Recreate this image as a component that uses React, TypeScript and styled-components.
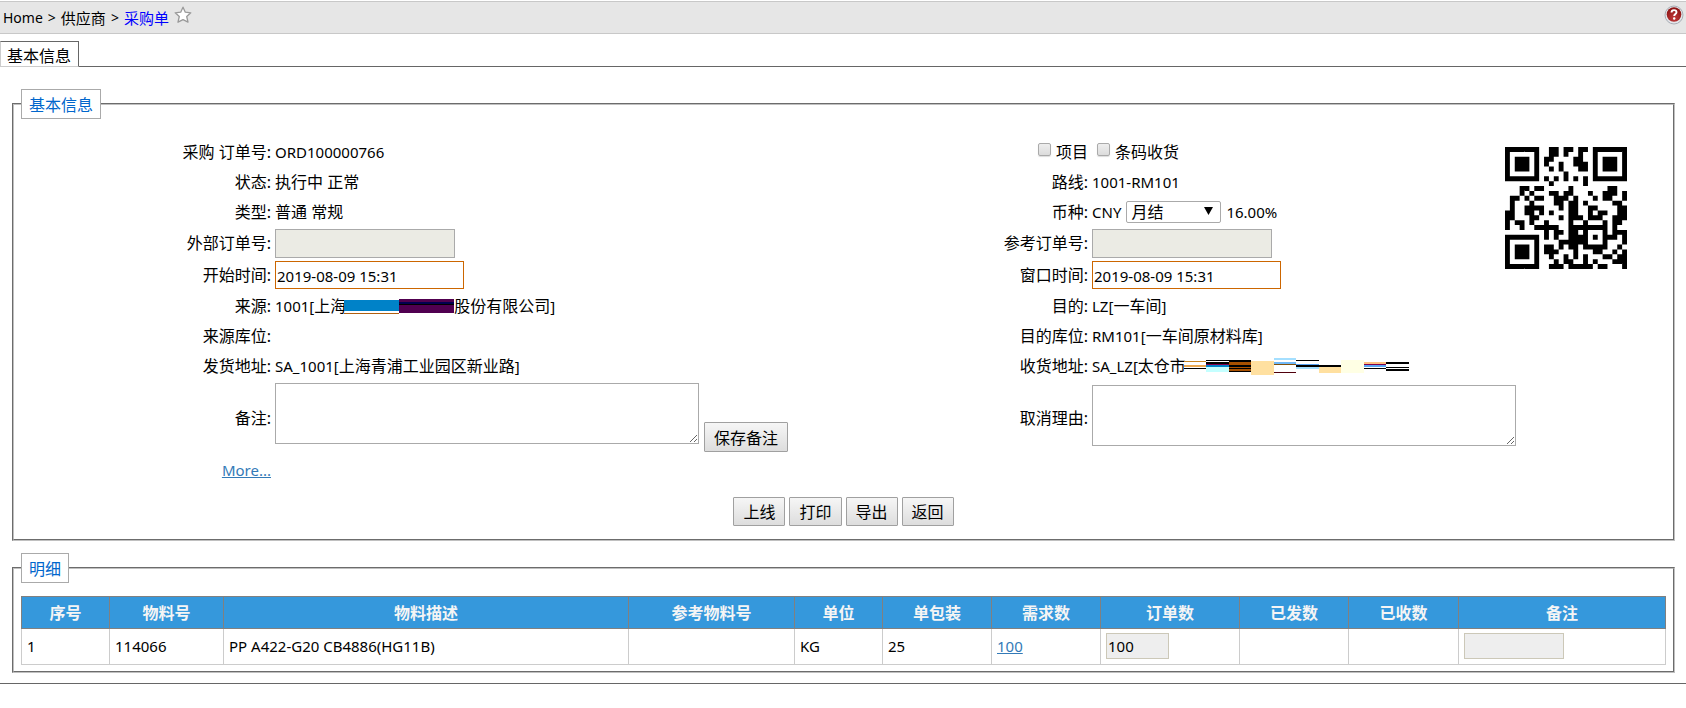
import React from "react";
import styled, { createGlobalStyle } from "styled-components";

/* ---------- QR code (version 2, level H, mask 6, byte mode) ---------- */

const QR_SIZE = 25;
const QR_DATA_CODEWORDS = 16;
const QR_EC_CODEWORDS = 28;
const QR_FORMAT = "000110100001100";

function gfMul(a: number, b: number): number {
  let r = 0;
  for (let i = 7; i >= 0; i--) {
    r = (r << 1) ^ ((r >>> 7) * 0x11d);
    r ^= ((b >>> i) & 1) * a;
  }
  return r;
}

function ecCodewords(data: number[]): number[] {
  const gen: number[] = new Array(QR_EC_CODEWORDS).fill(0);
  gen[QR_EC_CODEWORDS - 1] = 1;
  let root = 1;
  for (let i = 0; i < QR_EC_CODEWORDS; i++) {
    for (let j = 0; j < gen.length; j++) {
      gen[j] = gfMul(gen[j], root);
      if (j + 1 < gen.length) gen[j] ^= gen[j + 1];
    }
    root = gfMul(root, 2);
  }
  const rem: number[] = new Array(QR_EC_CODEWORDS).fill(0);
  data.forEach((byte) => {
    const factor = byte ^ (rem.shift() as number);
    rem.push(0);
    gen.forEach((g, i) => {
      rem[i] ^= gfMul(g, factor);
    });
  });
  return rem;
}

function encodeQr(text: string): boolean[][] {
  let bits = "0100" + text.length.toString(2).padStart(8, "0");
  for (const ch of text) bits += ch.charCodeAt(0).toString(2).padStart(8, "0");
  bits += "0000";
  const data: number[] = [];
  for (let i = 0; i < bits.length; i += 8) data.push(parseInt(bits.slice(i, i + 8), 2));
  for (let pad = 0xec; data.length < QR_DATA_CODEWORDS; pad ^= 0xec ^ 0x11) data.push(pad);
  const stream = [...data, ...ecCodewords(data)].map((b) => b.toString(2).padStart(8, "0")).join("");

  const grid: (boolean | null)[][] = Array.from({ length: QR_SIZE }, () => new Array(QR_SIZE).fill(null));
  const put = (r: number, c: number, v: boolean) => {
    if (r >= 0 && c >= 0 && r < QR_SIZE && c < QR_SIZE) grid[r][c] = v;
  };
  for (let i = 0; i < QR_SIZE; i++) {
    put(6, i, i % 2 === 0);
    put(i, 6, i % 2 === 0);
  }
  [[3, 3], [3, 21], [21, 3]].forEach(([cr, cc]) => {
    for (let dr = -4; dr <= 4; dr++)
      for (let dc = -4; dc <= 4; dc++) {
        const d = Math.max(Math.abs(dr), Math.abs(dc));
        put(cr + dr, cc + dc, d !== 2 && d !== 4);
      }
  });
  for (let dr = -2; dr <= 2; dr++)
    for (let dc = -2; dc <= 2; dc++) put(18 + dr, 18 + dc, Math.max(Math.abs(dr), Math.abs(dc)) !== 1);

  const near = [[8, 0], [8, 1], [8, 2], [8, 3], [8, 4], [8, 5], [8, 7], [8, 8], [7, 8], [5, 8], [4, 8], [3, 8], [2, 8], [1, 8], [0, 8]];
  [...QR_FORMAT].forEach((bit, i) => {
    put(near[i][0], near[i][1], bit === "1");
    if (i < 7) put(24 - i, 8, bit === "1");
    else put(8, 10 + i, bit === "1");
  });
  put(17, 8, true);

  let n = 0;
  for (let right = QR_SIZE - 1; right >= 1; right -= 2) {
    if (right === 6) right = 5;
    for (let v = 0; v < QR_SIZE; v++)
      for (let j = 0; j < 2; j++) {
        const c = right - j;
        const r = ((right + 1) & 2) === 0 ? QR_SIZE - 1 - v : v;
        if (grid[r][c] !== null) continue;
        const invert = (((r * c) % 2) + ((r * c) % 3)) % 2 === 0;
        grid[r][c] = (stream[n++] === "1") !== invert;
      }
  }
  return grid as boolean[][];
}

/* ---------- styles ---------- */

const GlobalStyle = createGlobalStyle`
  *, *::before, *::after { box-sizing: border-box; }
  body {
    margin: 0;
    background: #fff;
    color: #000;
    font: 400 16px/24px "Noto Sans", "Noto Sans CJK SC", sans-serif;
  }
  button, input, select, textarea { font: inherit; color: inherit; margin: 0; }
`;

const Latin = styled.span<{ $size?: number }>`
  font-size: ${(p) => p.$size ?? 15}px;
`;

const TopBar = styled.header`
  display: flex;
  justify-content: space-between;
  align-items: center;
  height: 33px;
  margin-top: 1px;
  padding: 0 2px 0 3px;
  background: #e6e6e6;
  border: solid #c8c8c8;
  border-width: 1px 0;
`;

const Breadcrumb = styled.nav`
  display: flex;
  align-items: center;
  gap: 5px;
  font-size: 15px;
`;

const CrumbLink = styled.a<{ $current?: boolean }>`
  color: ${(p) => (p.$current ? "#0000ff" : "#000")};
  text-decoration: none;
`;

const IconButton = styled.button`
  display: flex;
  padding: 0 0 5px;
  border: 0;
  background: none;
`;

const TabList = styled.div`
  display: flex;
  margin-top: 7px;
`;

const Tab = styled.button`
  position: relative;
  height: 26px;
  margin-bottom: -1px;
  padding: 4px 7px 0 6px;
  border: 1px solid #666;
  border-left-color: #ccc;
  border-bottom-color: #ccc;
  background: #fff;
  line-height: 20px;
`;

const TabPanel = styled.main`
  padding: 22px 11px 10px 12px;
  border: solid #666;
  border-width: 1px 0;
`;

const Panel = styled.fieldset<{ $top: number; $bottom: number }>`
  min-width: 0;
  margin: 0 0 ${(p) => (p.$bottom > 10 ? 12 : 0)}px;
  padding: ${(p) => p.$top}px 7px ${(p) => p.$bottom}px;
  border: 2px groove #c0c0c0;
`;

const Legend = styled.legend`
  padding: 3px 7px 1px;
  border: 1px solid #aaa;
  background: #fff;
  color: #0066cc;
`;

const FormGrid = styled.div`
  display: grid;
  grid-template-columns:
    minmax(0, 250fr) minmax(0, 560fr) minmax(0, 249fr) minmax(0, 409fr)
    minmax(0, 161fr);
  grid-template-rows:
    repeat(3, minmax(30px, auto)) repeat(2, minmax(32px, auto))
    repeat(3, minmax(30px, auto)) minmax(73px, auto) minmax(32px, auto);
  column-gap: 4px;
  align-items: center;
`;

const FieldLabel = styled.label<{ $right?: boolean }>`
  grid-column: ${(p) => (p.$right ? 3 : 1)};
  text-align: right;
  white-space: nowrap;
`;

const FieldValue = styled.div<{ $right?: boolean; $wide?: boolean }>`
  grid-column: ${(p) => (p.$right ? (p.$wide ? "4 / 6" : 4) : 2)};
  display: flex;
  align-items: center;
  gap: ${(p) => (p.$wide ? 0 : 5)}px;
  white-space: nowrap;
`;

const CheckLabel = styled.label<{ $column: number }>`
  grid-column: ${(p) => p.$column};
  justify-self: ${(p) => (p.$column === 3 ? "end" : "start")};
  display: flex;
  align-items: center;
  gap: 5px;
  padding-left: 5px;
`;

const CheckBox = styled.input`
  appearance: none;
  width: 13px;
  height: 13px;
  margin-bottom: 5px;
  border: 1px solid #aaa;
  border-radius: 2px;
  background: linear-gradient(#eee, #dcdcdc);
  box-shadow: 0 1px 1px #ddd;
`;

const TextInput = styled.input<{ $kind: "disabled" | "date" | "qty" | "note" }>`
  display: block;
  padding: ${(p) => (p.$kind === "date" ? "1px 1px 0" : "1px")};
  border: 1px solid;
  font-size: 15px;
  ${(p) => p.$kind === "disabled" && "width: 180px; height: 29px; border-color: #aaa; background: #ebebe4;"}
  ${(p) => p.$kind === "date" && "width: 189px; height: 28px; border-color: #cc6600; background: #fff;"}
  ${(p) => p.$kind === "qty" && "width: 63px; height: 26px; border-color: #ccc8b8; background: #eee;"}
  ${(p) => p.$kind === "note" && "width: 100px; height: 26px; border-color: #ccc8b8; background: #eee;"}
`;

const SelectWrap = styled.div`
  position: relative;
`;

const Select = styled.select`
  display: block;
  appearance: none;
  width: 95px;
  height: 22px;
  padding: 0 4px;
  border: 1px solid #aaa;
  border-radius: 2px;
  background: #fff;
  line-height: 20px;
`;

const SelectArrow = styled.svg`
  position: absolute;
  top: 6px;
  right: 8px;
  pointer-events: none;
`;

const RemarkRow = styled.div`
  display: flex;
  gap: 5px;
`;

const TextArea = styled.textarea<{ $right?: boolean }>`
  display: block;
  width: 424px;
  height: 61px;
  margin-bottom: ${(p) => (p.$right ? 4 : 0)}px;
  padding: 2px;
  border: 1px solid #aaa;
  background: #fff;
`;

const Button = styled.button<{ $tall?: boolean }>`
  align-self: flex-end;
  height: ${(p) => (p.$tall ? 30 : 29)}px;
  margin-top: ${(p) => (p.$tall ? 39 : 0)}px;
  padding: 1px 9px 0;
  border: 1px solid #a0a0a0;
  border-radius: 1px;
  background: linear-gradient(#f6f6f6, #dddddd);
  line-height: 24px;
`;

const TextLink = styled.a`
  color: #337ab7;
  font-size: 15px;
`;

const Actions = styled.div`
  display: flex;
  justify-content: center;
  gap: 4px;
  padding-top: 11px;
`;

const QrBox = styled.div`
  grid-column: 5;
  grid-row: 1 / 6;
  align-self: start;
  padding-top: 10px;
`;

const StripSvg = styled.svg`
  flex: none;
  margin-left: -2px;
`;

const Detail = styled.table`
  width: 100%;
  table-layout: fixed;
  border-collapse: collapse;
`;

const HeadCell = styled.th`
  height: 32px;
  padding: 0 5px;
  border: 1px solid #808080;
  background: #3598dc;
  color: #f5f5f5;
  font-weight: 700;
`;

const Cell = styled.td`
  height: 36px;
  padding: 0 5px 2px;
  border: 1px solid #ccc;
  font-size: 15px;
`;

/* ---------- drawings ---------- */

function QrCode({ text }: { text: string }) {
  const path = encodeQr(text)
    .map((row, r) => row.map((on, c) => (on ? `M${c} ${r}h1v1h-1z` : "")).join(""))
    .join("");
  return (
    <svg width="122" height="122" viewBox="0 0 25 25" role="img" aria-label={text} display="block">
      <path d={path} fill="#000" />
    </svg>
  );
}

function StarIcon() {
  return (
    <svg width="18" height="18" viewBox="0 0 18 18" aria-hidden="true">
      <path
        d="M9 1.200l2.300 5 5.500.6-4.100 3.700 1.300 5.700L9 13.600l-5 2.600 1.300-5.700L1.200 6.800l5.500-.6z"
        fill="#fff"
        stroke="#999"
        strokeWidth="1.300"
        strokeLinejoin="round"
      />
    </svg>
  );
}

function HelpIcon() {
  return (
    <svg width="20" height="20" viewBox="0 0 20 20" aria-hidden="true">
      <defs>
        <radialGradient id="helpRed" cx="50%" cy="75%" r="70%">
          <stop offset="0" stopColor="#c23a3a" />
          <stop offset="1" stopColor="#8c1414" />
        </radialGradient>
      </defs>
      <circle cx="10" cy="10" r="9" fill="#e4e6ea" stroke="#a9aeb6" />
      <circle cx="10" cy="9.500" r="7.300" fill="url(#helpRed)" />
      <path d="M7.500 7.600c0-1.700 1.100-2.500 2.500-2.500s2.500.9 2.500 2.200c0 1.700-2.300 1.800-2.300 3.700" fill="none" stroke="#fff" strokeWidth="1.900" />
      <circle cx="10.200" cy="13.500" r="1.200" fill="#fff" />
    </svg>
  );
}

type Strip = [x: number, y: number, w: number, h: number, fill: string];

const sourceStrips: Strip[] = [
  [0, 1, 55, 11, "#0082c8"],
  [0, 14, 55, 1, "#b06010"],
  [55, 0, 55, 14, "#500050"],
  [55, 3, 55, 3, "#000050"],
  [55, 5, 55, 1, "#000"],
];

const addressStrips: Strip[] = [
  [0, 3, 22, 1, "#c88420"], [0, 7, 22, 2, "#eba850"], [0, 10, 22, 1, "#000"],
  [22, 2, 23, 1, "#000"], [22, 4, 23, 2, "#000"], [22, 6, 23, 1, "#80004c"], [22, 7, 23, 2, "#0080c8"], [22, 9, 23, 5, "#c4ffff"],
  [45, 2, 22, 12, "#000"], [45, 4, 22, 3, "#a85000"], [45, 9, 22, 1, "#a85000"], [45, 11, 22, 2, "#a85000"],
  [67, 3, 23, 14, "#ffe0a0"],
  [90, 0, 22, 2, "#a4dfff"], [90, 4, 22, 2, "#70b8f8"], [90, 6, 22, 1, "#80500c"], [90, 14, 22, 1, "#50000c"],
  [112, 2, 23, 1, "#000"], [112, 6, 23, 1, "#58a4f4"], [112, 7, 23, 2, "#000"], [112, 9, 23, 2, "#a4dfff"],
  [135, 7, 22, 2, "#000"], [135, 9, 22, 6, "#ffe0a0"],
  [157, 2, 23, 13, "#ffffe4"],
  [180, 4, 22, 2, "#ffc080"], [180, 6, 22, 1, "#80004c"], [180, 7, 22, 2, "#58a4f4"], [180, 10, 22, 1, "#000"],
  [202, 4, 23, 2, "#000"], [202, 9, 23, 1, "#000"], [202, 11, 23, 2, "#000"],
];

function Strips({ width, height, items }: { width: number; height: number; items: Strip[] }) {
  return (
    <StripSvg width={width} height={height} aria-hidden="true" shapeRendering="crispEdges">
      {items.map(([x, y, w, h, fill], i) => (
        <rect key={i} x={x} y={y} width={w} height={h} fill={fill} />
      ))}
    </StripSvg>
  );
}

/* ---------- page ---------- */

const columns: [string, number][] = [
  ["序号", 88], ["物料号", 114], ["物料描述", 405], ["参考物料号", 166], ["单位", 88], ["单包装", 109],
  ["需求数", 109], ["订单数", 139], ["已发数", 109], ["已收数", 110], ["备注", 207],
];

export default function App() {
  return (
    <>
      <GlobalStyle />
      <TopBar>
        <Breadcrumb aria-label="breadcrumb">
          <CrumbLink href="#home"><Latin $size={14}>Home</Latin></CrumbLink>
          <Latin $size={14}>&gt;</Latin>
          <CrumbLink href="#supplier">供应商</CrumbLink>
          <Latin $size={14}>&gt;</Latin>
          <CrumbLink href="#order" $current>采购单</CrumbLink>
          <IconButton type="button" aria-label="收藏"><StarIcon /></IconButton>
        </Breadcrumb>
        <IconButton type="button" aria-label="帮助"><HelpIcon /></IconButton>
      </TopBar>

      <TabList role="tablist">
        <Tab type="button" role="tab" aria-selected="true">基本信息</Tab>
      </TabList>

      <TabPanel role="tabpanel">
        <Panel $top={18} $bottom={13}>
          <Legend>基本信息</Legend>
          <FormGrid>
            <FieldLabel as="span">采购 订单号:</FieldLabel>
            <FieldValue><Latin>ORD100000766</Latin></FieldValue>
            <CheckLabel $column={3}><CheckBox type="checkbox" />项目</CheckLabel>
            <CheckLabel $column={4}><CheckBox type="checkbox" />条码收货</CheckLabel>
            <QrBox><QrCode text="ORD100000766" /></QrBox>

            <FieldLabel as="span">状态:</FieldLabel>
            <FieldValue>执行中 正常</FieldValue>
            <FieldLabel as="span" $right>路线:</FieldLabel>
            <FieldValue $right><Latin>1001-RM101</Latin></FieldValue>

            <FieldLabel as="span">类型:</FieldLabel>
            <FieldValue>普通 常规</FieldValue>
            <FieldLabel $right htmlFor="settlement">币种:</FieldLabel>
            <FieldValue $right>
              <Latin>CNY</Latin>
              <SelectWrap>
                <Select id="settlement" defaultValue="月结"><option>月结</option></Select>
                <SelectArrow width="9" height="8" viewBox="0 0 9 8" aria-hidden="true">
                  <path d="M0 0h9L4.500 8z" fill="#000" />
                </SelectArrow>
              </SelectWrap>
              <Latin>16.00%</Latin>
            </FieldValue>

            <FieldLabel htmlFor="extNo">外部订单号:</FieldLabel>
            <FieldValue><TextInput id="extNo" type="text" $kind="disabled" disabled /></FieldValue>
            <FieldLabel $right htmlFor="refNo">参考订单号:</FieldLabel>
            <FieldValue $right><TextInput id="refNo" type="text" $kind="disabled" disabled /></FieldValue>

            <FieldLabel htmlFor="startTime">开始时间:</FieldLabel>
            <FieldValue><TextInput id="startTime" type="text" $kind="date" defaultValue="2019-08-09 15:31" /></FieldValue>
            <FieldLabel $right htmlFor="windowTime">窗口时间:</FieldLabel>
            <FieldValue $right><TextInput id="windowTime" type="text" $kind="date" defaultValue="2019-08-09 15:31" /></FieldValue>

            <FieldLabel as="span">来源:</FieldLabel>
            <FieldValue $wide>
              <span><Latin>1001[</Latin>上海</span>
              <Strips width={110} height={15} items={sourceStrips} />
              <span>股份有限公司<Latin>]</Latin></span>
            </FieldValue>
            <FieldLabel as="span" $right>目的:</FieldLabel>
            <FieldValue $right><span><Latin>LZ[</Latin>一车间<Latin>]</Latin></span></FieldValue>

            <FieldLabel as="span">来源库位:</FieldLabel>
            <FieldValue />
            <FieldLabel as="span" $right>目的库位:</FieldLabel>
            <FieldValue $right><span><Latin>RM101[</Latin>一车间原材料库<Latin>]</Latin></span></FieldValue>

            <FieldLabel as="span">发货地址:</FieldLabel>
            <FieldValue><span><Latin>SA_1001[</Latin>上海青浦工业园区新业路<Latin>]</Latin></span></FieldValue>
            <FieldLabel as="span" $right>收货地址:</FieldLabel>
            <FieldValue $right $wide>
              <span><Latin>SA_LZ[</Latin>太仓市</span>
              <Strips width={225} height={17} items={addressStrips} />
            </FieldValue>

            <FieldLabel htmlFor="remark">备注:</FieldLabel>
            <FieldValue>
              <RemarkRow>
                <TextArea id="remark" />
                <Button type="button" $tall>保存备注</Button>
              </RemarkRow>
            </FieldValue>
            <FieldLabel $right htmlFor="cancelReason">取消理由:</FieldLabel>
            <FieldValue $right $wide><TextArea id="cancelReason" $right /></FieldValue>

            <FieldLabel as="span"><TextLink href="#more">More...</TextLink></FieldLabel>
          </FormGrid>
          <Actions>
            {["上线", "打印", "导出", "返回"].map((name) => (
              <Button key={name} type="button">{name}</Button>
            ))}
          </Actions>
        </Panel>

        <Panel $top={13} $bottom={6}>
          <Legend>明细</Legend>
          <Detail>
            <colgroup>
              {columns.map(([name, width]) => <col key={name} style={{ width: `${width / 16.44}%` }} />)}
            </colgroup>
            <thead>
              <tr>{columns.map(([name]) => <HeadCell key={name} scope="col">{name}</HeadCell>)}</tr>
            </thead>
            <tbody>
              <tr>
                <Cell>1</Cell>
                <Cell>114066</Cell>
                <Cell>PP A422-G20 CB4886(HG11B)</Cell>
                <Cell />
                <Cell>KG</Cell>
                <Cell>25</Cell>
                <Cell><TextLink href="#demand">100</TextLink></Cell>
                <Cell><TextInput type="text" $kind="qty" aria-label="订单数" defaultValue="100" readOnly /></Cell>
                <Cell />
                <Cell />
                <Cell><TextInput type="text" $kind="note" aria-label="备注" readOnly /></Cell>
              </tr>
            </tbody>
          </Detail>
        </Panel>
      </TabPanel>
    </>
  );
}
